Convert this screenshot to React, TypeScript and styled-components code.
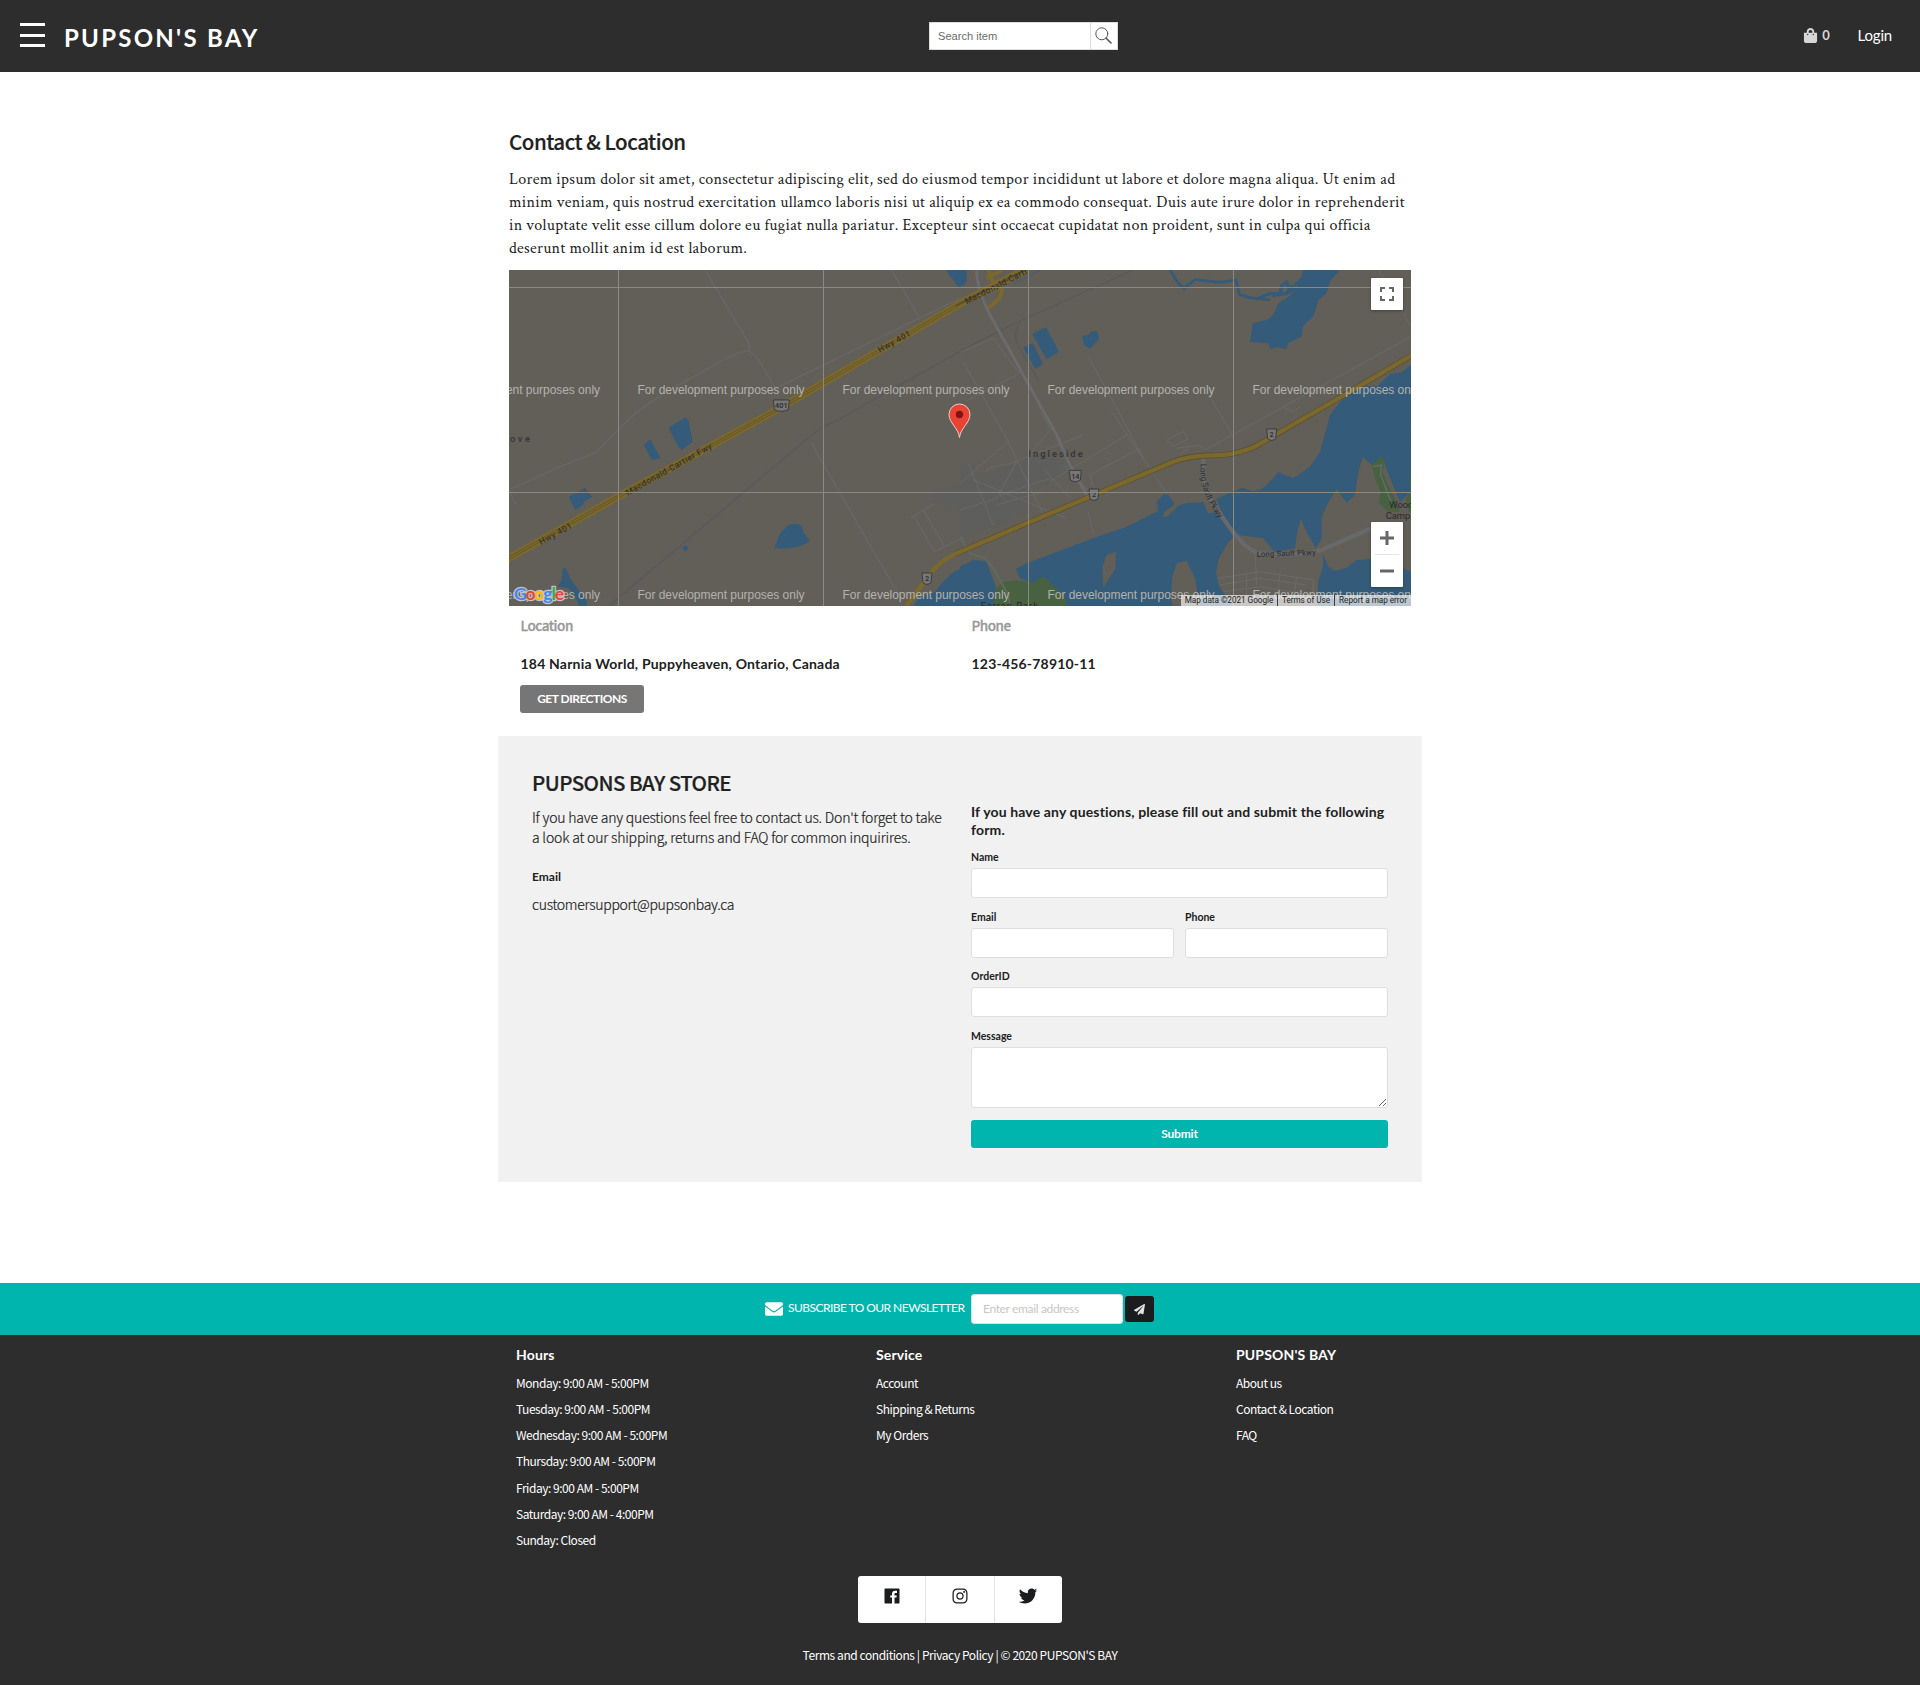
import React from "react";
import styled, { createGlobalStyle } from "styled-components";
import { FaShoppingBag, FaEnvelope, FaPaperPlane } from "react-icons/fa";
import { IoLogoFacebook, IoLogoInstagram, IoLogoTwitter } from "react-icons/io";

const lato = `Lato, "Liberation Sans", sans-serif`;
const source = `"Source Sans Pro", "Noto Sans CJK JP", "Noto Sans", sans-serif`;
const serif = `"Crimson Text", "Liberation Serif", serif`;

const GlobalStyle = createGlobalStyle`
  *, *::before, *::after { box-sizing: border-box; }
  body { margin: 0; background: #fff; color: #212121; font-family: ${lato}; }
  h1, h2, h3, h4, p, ul { margin: 0; padding: 0; font-weight: inherit; }
  ul { list-style: none; }
  button, input, textarea { font-family: inherit; margin: 0; }
`;

const Page = styled.div`
  display: flex;
  flex-direction: column;
  min-height: 1685px;
`;

/* Header */
const Header = styled.header`
  display: grid;
  grid-template-columns: 929px 189px 1fr;
  align-items: center;
  height: 72px;
  background: #2d2d2d;
  color: #fff;
`;
const Brand = styled.div`
  display: flex;
  align-items: center;
  padding-left: 20px;
  gap: 19px;
`;
const Burger = styled.button`
  display: flex;
  flex-direction: column;
  justify-content: space-between;
  width: 25px;
  height: 24px;
  margin-top: -2px;
  padding: 0;
  border: 0;
  background: none;
`;
const Bar = styled.span`
  height: 3px;
  width: 100%;
  background: #fff;
`;
const BrandName = styled.h1`
  font-size: 24px;
  line-height: 30px;
  font-weight: 700;
  letter-spacing: 2.25px;
  padding-top: 3px;
`;
const Search = styled.form`
  display: flex;
  height: 28px;
  border: 1px solid #ddd;
  background: #fff;
`;
const SearchInput = styled.input`
  flex: 1;
  min-width: 0;
  border: 0;
  padding: 0 8px;
  font: 11.1px "Liberation Sans", Arial, sans-serif;
  &::placeholder { color: #6b6b6b; opacity: 1; }
`;
const SearchButton = styled.button`
  display: flex;
  align-items: center;
  justify-content: center;
  width: 27px;
  padding: 0 1px 2px 0;
  border: 0;
  border-left: 1px solid #ddd;
  background: #fff;
`;
const HeaderLinks = styled.nav`
  display: flex;
  justify-content: flex-end;
  align-items: center;
  gap: 28px;
  padding: 0 28px 2px 0;
  font-size: 15px;
  letter-spacing: -0.2px;
`;
const Cart = styled.span`
  display: flex;
  align-items: center;
  gap: 4px;
  color: #d6d6d6;
  font-size: 13px;
  font-weight: 700;
`;

/* Content */
const Main = styled.main`
  width: 924px;
  height: 1211px;
  margin: 0 auto;
  padding-top: 53px;
`;
const Intro = styled.section`
  padding: 0 11px;
`;
const Title = styled.h2<{ $spacing: number }>`
  font-family: ${source};
  font-size: 20.5px;
  line-height: 32px;
  font-weight: 500;
  letter-spacing: ${(p) => p.$spacing}px;
  -webkit-text-stroke: 0.2px currentColor;
`;
const Lead = styled.p`
  margin: 11px 0 10px;
  font-family: ${serif};
  font-size: 16px;
  line-height: 23px;
  letter-spacing: 0.295px;
  white-space: nowrap;
`;
const Line = styled.span`
  display: block;
`;
const MapFrame = styled.div`
  position: relative;
  height: 336px;
  overflow: hidden;
  background: #625f58;
  svg.canvas { display: block; }
`;
const MapControls = styled.div<{ $top: number }>`
  position: absolute;
  top: ${(p) => p.$top}px;
  right: 8px;
  width: 32px;
  background: #fff;
  border-radius: 1px;
  box-shadow: 0 1px 3px rgba(0, 0, 0, 0.3);
`;
const MapButton = styled.button`
  display: flex;
  align-items: center;
  justify-content: center;
  width: 32px;
  height: 32px;
  padding: 0;
  border: 0;
  background: none;
`;
const MapDivider = styled.div`
  height: 1px;
  margin: 0 4px;
  background: #e6e6e6;
`;
const Attribution = styled.div`
  position: absolute;
  right: 0;
  bottom: 0;
  display: flex;
  height: 11px;
  background: rgba(245, 245, 245, 0.7);
  color: #222;
  font: 8.2px/11px Roboto, sans-serif;
  letter-spacing: -0.03px;
  white-space: nowrap;
`;
const Credit = styled.span<{ $width: number }>`
  width: ${(p) => p.$width}px;
  text-align: center;
  & + & { border-left: 1px solid #333f4a; }
`;

const Details = styled.section`
  display: grid;
  grid-template-columns: 451px 1fr;
  height: 130px;
  padding: 7px 0 0 22.5px;
`;
const DetailLabel = styled.h4`
  font-family: ${source};
  font-size: 13.5px;
  line-height: 24px;
  font-weight: 500;
  letter-spacing: -0.45px;
  color: #999;
  -webkit-text-stroke: 0.3px currentColor;
`;
const DetailValue = styled.p`
  margin-top: 17px;
  font-size: 14px;
  line-height: 20px;
  font-weight: 700;
  letter-spacing: 0.2px;
`;
const Directions = styled.button`
  display: block;
  width: 124px;
  height: 28px;
  margin: 11px 0 0 -0.5px;
  padding: 0 0 2px;
  border: 0;
  border-radius: 3px;
  background: #767676;
  color: #fff;
  font-size: 12px;
  font-weight: 700;
  letter-spacing: -0.5px;
`;

const Store = styled.section`
  display: grid;
  grid-template-columns: 439px 417px;
  height: 446px;
  padding: 30px 34px 0;
  background: #f1f1f1;
`;
const StoreText = styled.p<{ $top: number; $spacing: number }>`
  margin-top: ${(p) => p.$top}px;
  font-family: ${source};
  font-size: 14px;
  line-height: 20px;
  font-weight: 300;
  letter-spacing: ${(p) => p.$spacing}px;
  white-space: nowrap;
  -webkit-text-stroke: 0.2px currentColor;
`;
const SmallHead = styled.h4`
  margin-top: 21px;
  font-size: 12px;
  line-height: 18px;
  font-weight: 700;
`;
const Form = styled.form`
  display: flex;
  flex-direction: column;
  padding-top: 37px;
`;
const FormLead = styled.p`
  margin-bottom: 10px;
  font-size: 14px;
  line-height: 18px;
  font-weight: 700;
  letter-spacing: 0.14px;
  white-space: nowrap;
`;
const Field = styled.label<{ $gap: number }>`
  display: flex;
  flex-direction: column;
  gap: 3px;
  width: 100%;
  font-size: 10.5px;
  line-height: 16px;
  font-weight: 700;
  margin-bottom: ${(p) => p.$gap}px;
`;
const boxStyle = `
  display: block;
  width: 100%;
  border: 1px solid #dededf;
  border-radius: 3px;
  background: #fff;
`;
const Input = styled.input`
  ${boxStyle}
  height: 30px;
`;
const TextArea = styled.textarea`
  ${boxStyle}
  height: 61px;
`;
const FieldRow = styled.div`
  display: flex;
  gap: 11px;
`;
const Submit = styled.button`
  height: 28px;
  padding: 0 0 2px;
  border: 0;
  border-radius: 3px;
  background: #00b5ad;
  color: #fff;
  font-size: 12px;
  font-weight: 700;
  letter-spacing: -0.2px;
`;

/* Newsletter */
const Newsletter = styled.section`
  display: flex;
  align-items: center;
  height: 52px;
  padding-left: 765px;
  background: #00b5ad;
  color: #fff;
`;
const NewsLabel = styled.span`
  width: 188px;
  padding: 0 0 3px 5px;
  font-size: 12px;
  letter-spacing: -0.54px;
  white-space: nowrap;
`;
const NewsInput = styled.input`
  width: 152px;
  height: 30px;
  padding: 0 11px 1px;
  border: 1px solid #dededf;
  border-radius: 3px;
  font-size: 12px;
  letter-spacing: -0.35px;
  &::placeholder { color: #c7c7c7; opacity: 1; }
`;
const SendButton = styled.button`
  display: flex;
  align-items: center;
  justify-content: center;
  width: 29px;
  height: 26px;
  margin-left: 2px;
  padding: 0;
  border: 0;
  border-radius: 3px;
  background: #1b1c1d;
  color: #e3e3e3;
  font-size: 11px;
`;

/* Footer */
const Footer = styled.footer`
  flex: 1;
  display: flex;
  flex-direction: column;
  align-items: center;
  background: #2d2d2d;
  color: #fff;
`;
const Columns = styled.div`
  display: grid;
  grid-template-columns: repeat(3, 360px);
  width: 888px;
  height: 241px;
  padding-top: 10px;
`;
const ColumnTitle = styled.h3`
  margin-bottom: 5px;
  font-size: 14px;
  line-height: 20px;
  font-weight: 700;
  letter-spacing: 0.15px;
`;
const ColumnItem = styled.li`
  font-family: ${source};
  font-size: 12px;
  line-height: 26.15px;
  letter-spacing: -0.47px;
`;
const Social = styled.div`
  display: flex;
  width: 204px;
  height: 47px;
  border-radius: 3px;
  background: #fff;
  overflow: hidden;
`;
const SocialLink = styled.a`
  display: flex;
  flex: 1;
  justify-content: center;
  padding-top: 10px;
  color: #1b1c1d;
  font-size: 20px;
  & + & { border-left: 1px solid #e3e3e3; }
`;
const Legal = styled.p`
  margin-top: 22px;
  font-family: ${source};
  font-size: 12px;
  line-height: 20px;
  letter-spacing: -0.42px;
  white-space: nowrap;
`;

const GRID_X = [109.5, 314.5, 519.5, 724.5];
const GRID_Y = [17.5, 222.5];
const MARKS = [-76, 128.5, 333.5, 538.5, 743.5];
const WATER = "#345b79";
const LAND = "#625f58";
const ROAD = "#7b682c";

const Shield = ({ x, y, n, w = 30 }: { x: number; y: number; n: string; w?: number }) => (
  <g transform={`translate(${x} ${y})`}>
    <path d={`M${-w / 2} -17H${w / 2}L${w / 2 - 3} 12Q0 22 ${-w / 2 + 3} 12Z`} fill="#777" stroke="#3c3c3c" strokeWidth="3" />
    <text y="8" textAnchor="middle" fontSize="22" fontWeight="500" fill="#2b2b2b">{n}</text>
  </g>
);

const WestTile = () => (
  <g transform="translate(-4 -5) scale(.33333)">
    <g fill="none" stroke="#676768" strokeWidth="4">
      <path d="M600 15L732 235Q738 258 720 260Q690 262 590 322Q440 400 375 460L275 560Q260 570 160 607L12 675L32 717" />
      <path d="M732 258Q760 275 770 300L812 370L1365 100M1160 15L1244 160M918 533L1190 1005M1218 758L1290 715L1380 690M1227 753L1288 860L1380 815M1256 735L1316 840" />
    </g>
    <path d="M312 1023L920 510Q960 480 1000 465L1180 362L1380 252" fill="none" stroke="#5a5a5c" strokeWidth="5" />
    <path d="M1285 715L1282 680L1320 660L1335 675L1380 640V815L1360 790L1370 740L1330 720Z" fill="#5e5e5d" />
    <g fill={WATER}>
      <path d="M491 488L540 457L550 465L563 530L530 555L520 545Z" />
      <path d="M416 540L436 523L467 580L440 585Z" />
      <path d="M192 695L240 668L262 695L237 710L233 720L210 735Z" />
      <path d="M810 845L825 805L850 780Q880 773 890 782L895 800L915 828Q900 840 875 845Q840 855 810 848Z" />
      <path d="M537 842L546 842L550 853L542 858L533 853Z" />
      <path d="M172 915Q178 903 184 912L195 940L225 980L245 1008V1023H222L207 985L190 970L158 965L170 945Z" />
      <path d="M1322 15L1360 66L1380 58V15Z" />
      <path d="M1380 903L1340 925L1310 955L1290 980L1240 1000L1225 1023H1380Z" />
    </g>
    <path d="M2 885L345 692L820 432L1390 102" stroke={ROAD} strokeWidth="23" fill="none" />
    <path d="M2 885L345 692L820 432L1390 102" stroke="#5c512d" strokeWidth="9" fill="none" />
    <path d="M2 885L345 692L820 432L1390 102" stroke={ROAD} strokeWidth="5" fill="none" />
    <path d="M1204 1023Q1250 960 1285 915Q1320 875 1380 855" stroke={ROAD} strokeWidth="13" fill="none" />
    <g fill="#28282b" fontSize="25">
      <text transform="translate(108 840) rotate(-29)" textLength="108">Hwy 401</text>
      <text transform="translate(368 692) rotate(-29.3)" textLength="292">Macdonald-Cartier Fwy</text>
      <text transform="translate(1124 263) rotate(-29)" textLength="108">Hwy 401</text>
      <text x="15" y="530" fontSize="28" textLength="60" fontWeight="500" fill="#333538">ove</text>
    </g>
    <Shield x={829} y={422} n="401" w={48} />
    <Shield x={1266} y={941} n="2" />
  </g>
);

const EastTile = () => (
  <g transform="translate(451 -5) scale(.33333)">
    <path d="M0 600L30 590L60 640L170 590L230 560L300 580L330 620L200 690L205 740L100 785L0 820Z" fill="#5e5e5d" />
    <g fill="none" stroke="#696969" strokeWidth="3">
      <path d="M10 290L145 530L250 750M0 262L100 220L178 325L15 410M215 560L272 493L240 440M25 595L100 780M0 655L145 530M0 735L110 700L170 590M40 645L320 760" />
      <path d="M75 620Q90 600 140 600L370 510M270 650L500 510M390 630L540 550M390 630L400 665M385 275L470 430L550 580M455 440L620 685M750 395L820 515M735 555L1353 215M975 430L1000 440L1020 425M140 710L120 690L270 640M250 610L330 700M310 600L390 680M110 720L250 680M385 740L400 810" />
      <path d="M620 525L670 500L685 520L640 545ZM650 550L720 540L735 555M660 570L690 545M1255 15L1280 60M1325 135L1353 185M885 860L890 960" />
    </g>
    <path d="M0 258L165 175L520 15M235 345L185 260Q150 210 180 175" fill="none" stroke="#59595a" strokeWidth="4" />
    <path d="M50 15Q50 70 90 150L290 510L330 600L385 700" fill="none" stroke="#6a6b6d" strokeWidth="9" />
    <g fill={WATER}>
      <path d="M0 15H20V50L0 65Z" />
      <path d="M217 208L258 186L297 260L260 283Z" />
      <path d="M189 248L218 234L249 298L226 311Z" />
      <path d="M366 213L385 210Q395 195 412 199L417 222L390 251L372 240Z" />
      <path d="M1030 15H1140L1110 48L1100 85L1075 105L1062 150L1028 185L1025 215L983 235L980 252L950 247L930 252L925 235L870 231L878 175L920 165L940 150L955 115L990 92L1015 65L1000 58L1022 40Z" />
      <path d="M167 912Q180 905 200 895L400 820L500 785L595 737L590 710L612 688L625 690L642 713L640 722L612 742L607 755L622 755L655 722L680 714L730 711L745 745L765 742L790 760L820 815L800 840L775 885L768 925L778 965L820 1025H318L315 995L250 935L215 955L180 940Z" />
      <path d="M1353 300L1325 322L1290 328L1250 365L1190 362L1150 400L1110 450L1097 500L1080 560L1050 605L1000 640L955 622L925 655Q905 678 880 678L845 668L768 702L800 770L832 810L910 820L945 862L1005 850L1012 800L1022 762L1045 810L1068 850L1085 820V755L1105 710L1130 672L1160 713L1185 690L1195 620L1208 575L1235 600L1265 575L1290 640L1320 710L1353 680Z" />
      <path d="M1088 865L1105 905L1125 918L1160 908L1190 885L1260 880L1353 920V1025H1070L1075 950L1090 900Z" />
      <path d="M0 905L40 885L78 888L95 930L108 965L100 1025H0Z" />
    </g>
    <g fill={LAND}>
      <path d="M427 905L440 870L467 860V910L430 968Z" />
      <path d="M632 1000L637 935L650 895L680 887L705 940L720 1025H640Z" />
    </g>
    <g fill="none" stroke={WATER}>
      <path d="M630 15L655 55L672 70L705 44L780 52L828 45L838 88L870 98L930 105" strokeWidth="8" />
      <path d="M890 103L930 85L960 88L965 62L980 52L990 80L1010 65M1000 60L980 85L935 92" strokeWidth="10" />
    </g>
    <path d="M160 52L205 35L240 15" stroke="#4a5c68" strokeWidth="3" fill="none" />
    <g fill="#486241">
      <path d="M105 975L130 950L175 945L215 955L250 935L315 995L320 1025H100Z" />
      <path d="M1235 600L1265 573L1275 590L1268 622L1303 700L1320 740H1285L1255 715L1262 680L1245 640Z" />
      <path d="M1353 615L1348 660L1353 680L1338 700L1345 740H1353Z" />
    </g>
    <path d="M0 815L30 865L75 880L100 910L145 990L150 1023M1240 605L1265 600L1262 630L1295 715" stroke="#626b62" strokeWidth="5" fill="none" />
    <path d="M730 575V640Q740 700 790 760Q850 850 890 862Q990 880 1085 855L1233 790" stroke="#68696b" strokeWidth="13" fill="none" />
    <g fill="none" stroke="#6a6a66" strokeWidth="3">
      <path d="M775 940L900 920L1060 945V985M780 960L900 940L1040 960M790 980L900 965L1050 990M860 920V1000M960 925L950 1020M1010 935L1000 1010" />
    </g>
    <path d="M-12 122L60 84L205 10" stroke={ROAD} strokeWidth="23" fill="none" />
    <path d="M-12 122L60 84L205 10" stroke="#5c512d" strokeWidth="7" fill="none" />
    <path d="M85 15L95 45L125 75Q128 100 85 128M80 40L125 15" stroke={ROAD} strokeWidth="12" fill="none" />
    <path d="M-15 867L200 775L402 690L640 590Q680 575 735 572L790 570Q840 565 890 542L935 516L1150 392L1353 272" stroke="#574d30" strokeWidth="17" fill="none" />
    <path d="M-15 867L200 775L402 690L640 590Q680 575 735 572L790 570Q840 565 890 542L935 516L1150 392L1353 272" stroke={ROAD} strokeWidth="13" fill="none" />
    <defs><path id="pkwy" d="M722 596Q716 680 782 768" /></defs>
    <g fill="#28282b" fontSize="25">
      <text transform="translate(20 118) rotate(-27)" textLength="205">Macdonald-Carti</text>
      <text x="205" y="575" fontSize="28" textLength="163" fontWeight="500" fill="#333538">Ingleside</text>
      <text fontSize="24" fill="#2b2b2b"><textPath href="#pkwy">Long Sault Pkwy</textPath></text>
      <text transform="translate(890 876) rotate(-2)" textLength="178" fontSize="23">Long Sault Pkwy</text>
      <text x="1288" y="729" fontSize="28">Wood</text>
      <text x="1277" y="763" fontSize="28">Camp</text>
      <text x="62" y="1032" fontSize="28" textLength="172">Farran Park</text>
    </g>
    <Shield x={346} y={633} n="14" w={36} />
    <Shield x={402} y={689} n="2" />
    <Shield x={935} y={509} n="2" />
  </g>
);

const GOOGLE: [string, string][] = [["G", "#4285f4"], ["o", "#ea4335"], ["o", "#fbbc05"], ["g", "#4285f4"], ["l", "#34a853"], ["e", "#ea4335"]];

const StoreMap = () => (
  <MapFrame>
    <svg className="canvas" width="902" height="336" fontFamily="Roboto, sans-serif">
      <rect width="902" height="336" fill={LAND} />
      <WestTile />
      <EastTile />
      <g stroke="#8b8984" strokeWidth="1">
        {GRID_X.map((x) => <path key={x} d={`M${x} 0V336`} />)}
        {GRID_Y.map((y) => <path key={y} d={`M0 ${y}H902`} />)}
      </g>
      <g fill="#b3b2ae" fontFamily="Liberation Sans, sans-serif" fontSize="12">
        {[124, 329].map((y) => MARKS.map((x) => (
          <text key={`${x}-${y}`} x={x} y={y} textLength="167">For development purposes only</text>
        )))}
      </g>
      <g transform="translate(450.5 134)">
        <path d="M0 33.5C-1 24-10.5 19-10.5 10.5A10.5 10.5 0 0 1 10.5 10.5C10.5 19 1 24 0 33.5Z" fill="#ea4335" stroke="#e9d0cb" strokeWidth="1" />
        <circle cy="10.5" r="3.7" fill="#811411" />
      </g>
      <g fontFamily="Lato, sans-serif" fontSize="17.5" fontWeight="700">
        <text x="5" y="330" textLength="50" fill="#c4c4c4" stroke="#c4c4c4" strokeWidth="2.4" aria-hidden="true">Google</text>
        <text x="5" y="330" textLength="50">
          {GOOGLE.map(([c, fill], i) => <tspan key={i} fill={fill}>{c}</tspan>)}
        </text>
      </g>
    </svg>
    <MapControls $top={8}>
      <MapButton aria-label="Toggle fullscreen">
        <svg width="14" height="14" viewBox="0 0 14 14" fill="none" stroke="#666" strokeWidth="2">
          <path d="M1 5V1H5M9 1H13V5M13 9V13H9M5 13H1V9" />
        </svg>
      </MapButton>
    </MapControls>
    <MapControls $top={252}>
      <MapButton aria-label="Zoom in">
        <svg width="14" height="14" stroke="#666" strokeWidth="3"><path d="M0 7H14M7 0V14" /></svg>
      </MapButton>
      <MapDivider />
      <MapButton aria-label="Zoom out">
        <svg width="14" height="14" stroke="#666" strokeWidth="3"><path d="M0 7H14" /></svg>
      </MapButton>
    </MapControls>
    <Attribution>
      <Credit $width={96}>Map data ©2021 Google</Credit>
      <Credit $width={57}>Terms of Use</Credit>
      <Credit $width={77}>Report a map error</Credit>
    </Attribution>
  </MapFrame>
);

const LEAD = [
  "Lorem ipsum dolor sit amet, consectetur adipiscing elit, sed do eiusmod tempor incididunt ut labore et dolore magna aliqua. Ut enim ad",
  "minim veniam, quis nostrud exercitation ullamco laboris nisi ut aliquip ex ea commodo consequat. Duis aute irure dolor in reprehenderit",
  "in voluptate velit esse cillum dolore eu fugiat nulla pariatur. Excepteur sint occaecat cupidatat non proident, sunt in culpa qui officia",
  "deserunt mollit anim id est laborum.",
];

const FOOTER = [
  {
    title: "Hours",
    items: [
      "Monday: 9:00 AM - 5:00PM",
      "Tuesday: 9:00 AM - 5:00PM",
      "Wednesday: 9:00 AM - 5:00PM",
      "Thursday: 9:00 AM - 5:00PM",
      "Friday: 9:00 AM - 5:00PM",
      "Saturday: 9:00 AM - 4:00PM",
      "Sunday: Closed",
    ],
  },
  { title: "Service", items: ["Account", "Shipping & Returns", "My Orders"] },
  { title: "PUPSON'S BAY", items: ["About us", "Contact & Location", "FAQ"] },
];

export default function App() {
  return (
    <Page>
      <GlobalStyle />
      <Header>
        <Brand>
          <Burger aria-label="Menu"><Bar /><Bar /><Bar /></Burger>
          <BrandName>PUPSON'S BAY</BrandName>
        </Brand>
        <Search>
          <SearchInput placeholder="Search item" />
          <SearchButton type="button" aria-label="Search">
            <svg width="17" height="17" viewBox="0 0 17 17" fill="none" stroke="#555" strokeLinecap="round">
              <circle cx="6.8" cy="6.8" r="6" strokeWidth="1" />
              <path d="M11.2 11.2L16 16" strokeWidth="1.6" />
            </svg>
          </SearchButton>
        </Search>
        <HeaderLinks>
          <Cart><FaShoppingBag size={15} />0</Cart>
          <span>Login</span>
        </HeaderLinks>
      </Header>

      <Main>
        <Intro>
          <Title $spacing={-0.48}>Contact &amp; Location</Title>
          <Lead>{LEAD.map((text) => <Line key={text}>{text}</Line>)}</Lead>
          <StoreMap />
        </Intro>

        <Details>
          <div>
            <DetailLabel>Location</DetailLabel>
            <DetailValue>184 Narnia World, Puppyheaven, Ontario, Canada</DetailValue>
            <Directions>GET DIRECTIONS</Directions>
          </div>
          <div>
            <DetailLabel>Phone</DetailLabel>
            <DetailValue>123-456-78910-11</DetailValue>
          </div>
        </Details>

        <Store>
          <div>
            <Title $spacing={-0.56}>PUPSONS BAY STORE</Title>
            <StoreText $top={9} $spacing={-0.19}>
              If you have any questions feel free to contact us. Don't forget to take<br />
              a look at our shipping, returns and FAQ for common inquirires.
            </StoreText>
            <SmallHead>Email</SmallHead>
            <StoreText $top={8} $spacing={-0.29}>customersupport@pupsonbay.ca</StoreText>
          </div>
          <Form>
            <FormLead>
              If you have any questions, please fill out and submit the following<br />form.
            </FormLead>
            <Field $gap={11}>Name<Input /></Field>
            <FieldRow>
              <Field $gap={10}>Email<Input /></Field>
              <Field $gap={10}>Phone<Input /></Field>
            </FieldRow>
            <Field $gap={11}>OrderID<Input /></Field>
            <Field $gap={12}>Message<TextArea /></Field>
            <Submit type="button">Submit</Submit>
          </Form>
        </Store>
      </Main>

      <Newsletter>
        <FaEnvelope size={18} />
        <NewsLabel>SUBSCRIBE TO OUR NEWSLETTER</NewsLabel>
        <NewsInput placeholder="Enter email address" />
        <SendButton aria-label="Subscribe"><FaPaperPlane /></SendButton>
      </Newsletter>

      <Footer>
        <Columns>
          {FOOTER.map((col) => (
            <div key={col.title}>
              <ColumnTitle>{col.title}</ColumnTitle>
              <ul>{col.items.map((item) => <ColumnItem key={item}>{item}</ColumnItem>)}</ul>
            </div>
          ))}
        </Columns>
        <Social>
          <SocialLink><IoLogoFacebook /></SocialLink>
          <SocialLink><IoLogoInstagram /></SocialLink>
          <SocialLink><IoLogoTwitter /></SocialLink>
        </Social>
        <Legal>Terms and conditions | Privacy Policy | © 2020 PUPSON'S BAY</Legal>
      </Footer>
    </Page>
  );
}
